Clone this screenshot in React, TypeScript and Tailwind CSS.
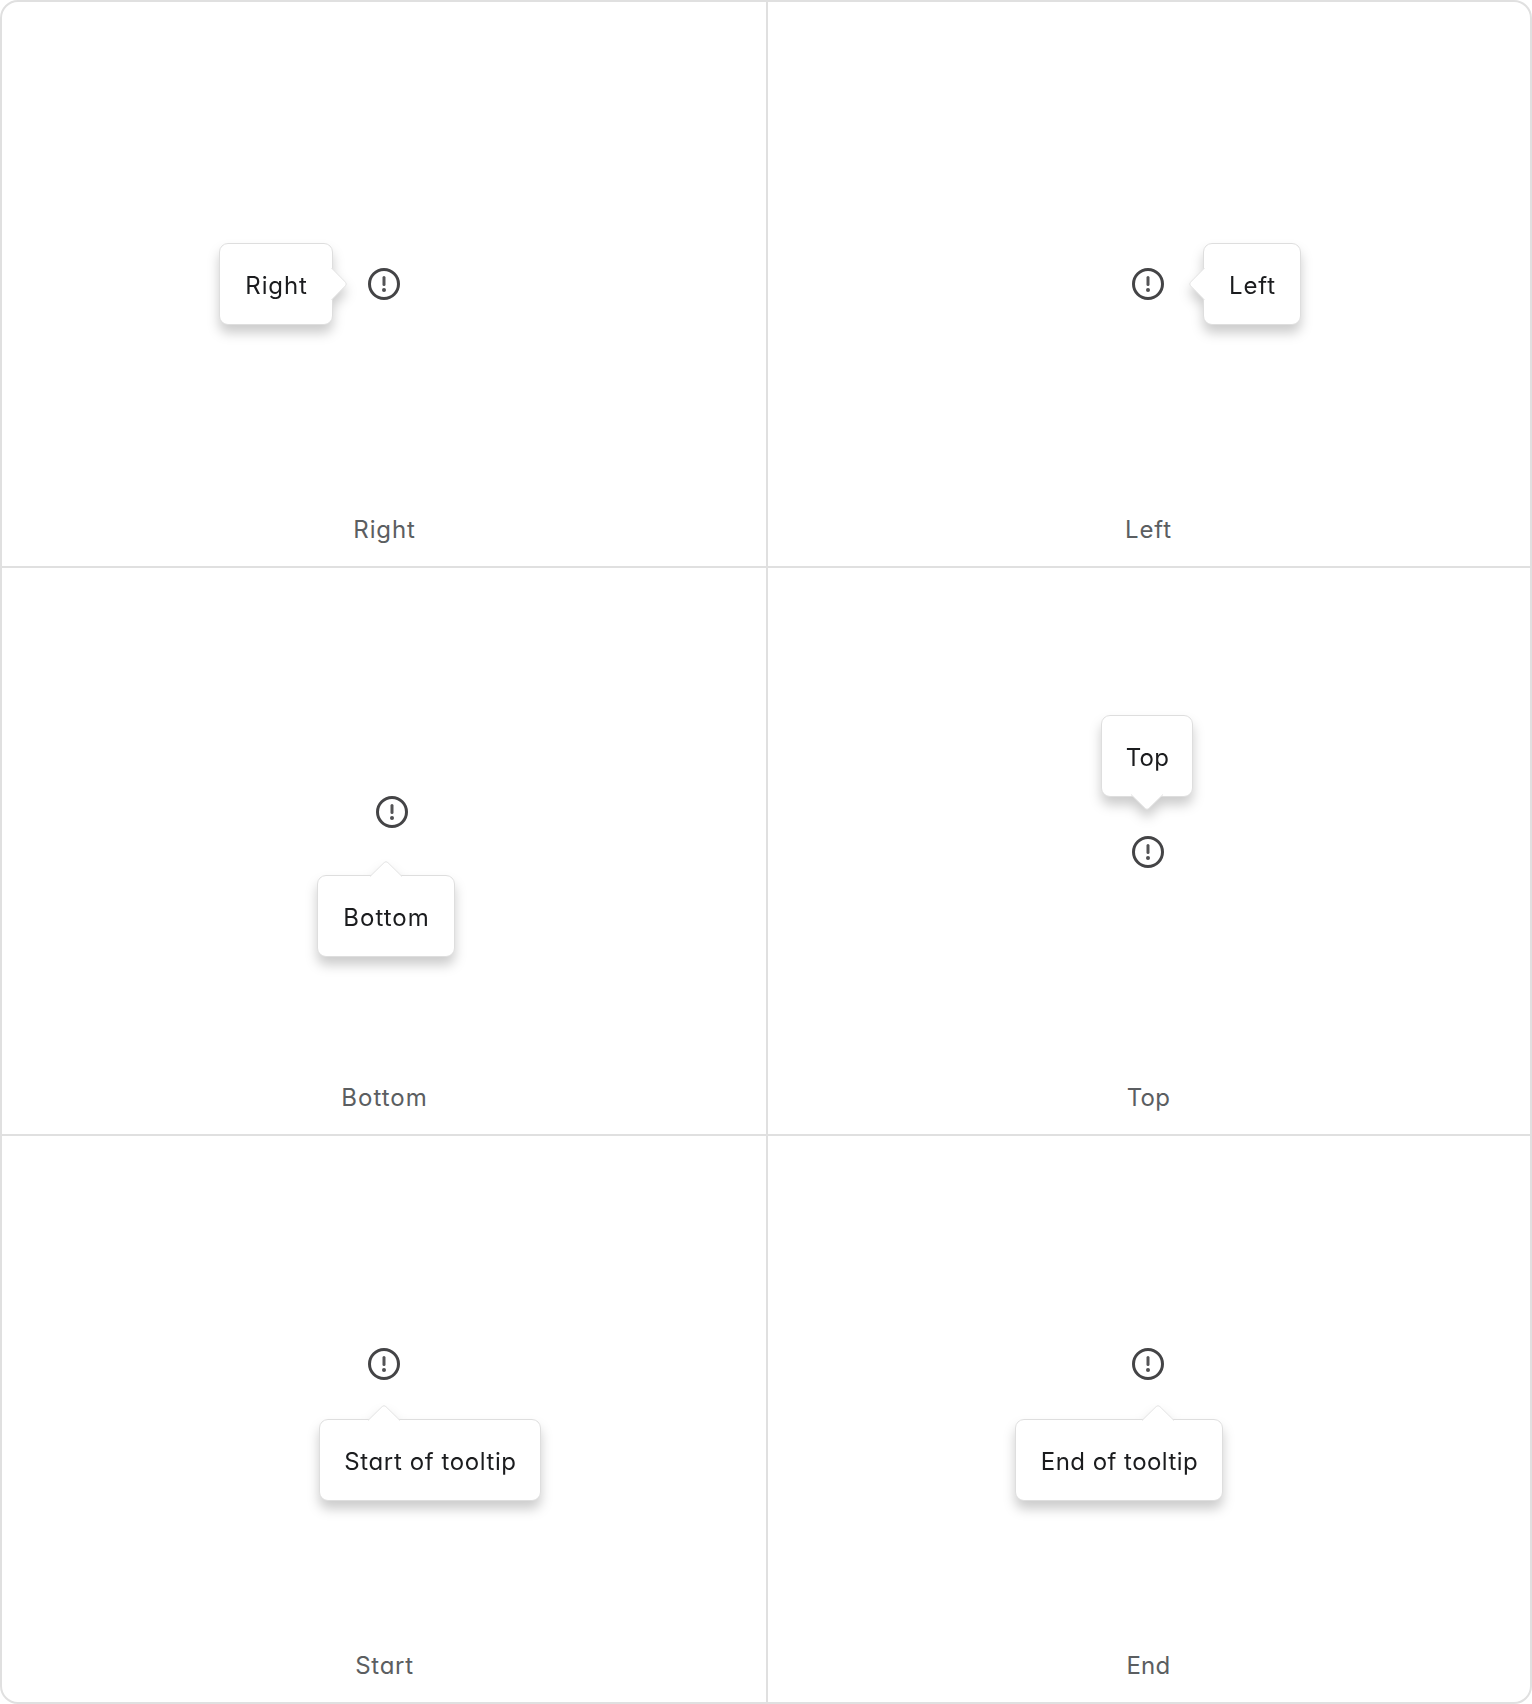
import React from 'react';
import clsx from 'clsx';

type Side = 'right' | 'left' | 'bottom' | 'top';

type Placement = {
    caption: string;
    text: string;
    arrow: Side;
    cell: string;
    icon?: string;
    tooltip: string;
    arrowPosition: string;
    tracking: string;
    captionTracking: string;
};

const placements: Placement[] = [
    {
        caption: 'Right',
        text: 'Right',
        arrow: 'right',
        cell: 'pt-[266px] border-r-2 border-b-2',
        tooltip: 'right-[67px] -top-[25px] w-[114px]',
        arrowPosition: '-right-[15px] top-[24px]',
        tracking: 'tracking-[0.85px]',
        captionTracking: 'tracking-[0.85px]',
    },
    {
        caption: 'Left',
        text: 'Left',
        arrow: 'left',
        cell: 'pt-[266px] pr-0.5 border-b-2',
        tooltip: 'left-[71px] -top-[25px] w-[98px]',
        arrowPosition: '-left-[15px] top-[24px]',
        tracking: 'tracking-[0.9px]',
        captionTracking: 'tracking-[0.9px]',
    },
    {
        caption: 'Bottom',
        text: 'Bottom',
        arrow: 'top',
        cell: 'pt-[228px] border-r-2 border-b-2',
        icon: 'ml-4',
        tooltip: '-left-[59px] top-[79px] w-[138px]',
        arrowPosition: 'left-[52px] -top-[15px]',
        tracking: 'tracking-[1px]',
        captionTracking: 'tracking-[1px]',
    },
    {
        caption: 'Top',
        text: 'Top',
        arrow: 'bottom',
        cell: 'pt-[268px] pr-0.5 border-b-2',
        tooltip: '-left-[31px] -top-[121px] w-[92px]',
        arrowPosition: 'left-[29px] -bottom-[14px]',
        tracking: 'tracking-[0.3px]',
        captionTracking: 'tracking-[0.3px]',
    },
    {
        caption: 'Start',
        text: 'Start of tooltip',
        arrow: 'top',
        cell: 'pt-[212px] border-r-2',
        tooltip: '-left-[49px] top-[71px] w-[222px]',
        arrowPosition: 'left-[48px] -top-[15px]',
        tracking: 'tracking-[0.6px]',
        captionTracking: 'tracking-[0.7px]',
    },
    {
        caption: 'End',
        text: 'End of tooltip',
        arrow: 'top',
        cell: 'pt-[212px] pr-0.5',
        tooltip: '-left-[117px] top-[71px] w-[208px]',
        arrowPosition: 'left-[126px] -top-[15px]',
        tracking: 'tracking-[0.45px]',
        captionTracking: 'tracking-[0.3px]',
    },
];

// Filled triangle plus an outline on the two outer edges only
const arrowShapes: Record<Side, { width: number; height: number; d: string }> = {
    top: { width: 32, height: 16, d: 'M0 15.5 L14.2 1.5 Q16 -0.1 17.8 1.5 L32 15.5' },
    bottom: { width: 32, height: 16, d: 'M0 0.5 L14.2 14.5 Q16 16.1 17.8 14.5 L32 0.5' },
    left: { width: 16, height: 32, d: 'M15.5 0 L1.5 14.2 Q-0.1 16 1.5 17.8 L15.5 32' },
    right: { width: 16, height: 32, d: 'M0.5 0 L14.5 14.2 Q16.1 16 14.5 17.8 L0.5 32' },
};

function Arrow({ side, className }: { side: Side; className: string }) {
    const { width, height, d } = arrowShapes[side];

    return (
        <svg className={clsx('absolute', className)} width={width} height={height} viewBox={`0 0 ${width} ${height}`}>
            <path d={`${d} Z`} fill="#fff" />
            <path d={d} fill="none" stroke="#e2e2e2" />
        </svg>
    );
}

function AlertIcon() {
    return (
        <svg className="block" width="32" height="32" viewBox="0 0 32 32" fill="none">
            <circle cx="16" cy="16" r="14.5" stroke="#444446" strokeWidth="3" />
            <path d="M16 9.5v7" stroke="#545456" strokeWidth="3" strokeLinecap="round" />
            <circle cx="16" cy="22" r="2" fill="#505052" />
        </svg>
    );
}

function PlacementCell({ item }: { item: Placement }) {
    return (
        <div className={clsx('flex flex-col items-center justify-between border-[#e0e0e0] pb-[18px]', item.cell)}>
            <div className={clsx('relative', item.icon)}>
                <AlertIcon />
                <div
                    className={clsx(
                        'absolute flex h-[82px] items-center justify-center rounded-[9px] border border-[#dedede] bg-white pt-[3px] text-[#1b1c1e] drop-shadow-[0_8px_6px_rgba(0,0,0,0.2)]',
                        item.tooltip,
                    )}
                >
                    <span className={clsx('pl-px whitespace-nowrap', item.tracking)}>{item.text}</span>
                    <Arrow side={item.arrow} className={item.arrowPosition} />
                </div>
            </div>
            <p className={clsx('pl-px text-[#5b5e61]', item.captionTracking)}>{item.caption}</p>
        </div>
    );
}

export default function App() {
    return (
        <div className="grid h-[1704px] w-[1532px] grid-cols-[766px_762px] grid-rows-[566px_568px_566px] overflow-hidden rounded-[18px] border-2 border-[#e0e0e0] bg-white font-['Inter',sans-serif] text-2xl leading-[36px] font-normal [font-feature-settings:'cv11']">
            {placements.map((item) => (
                <PlacementCell key={item.caption} item={item} />
            ))}
        </div>
    );
}
